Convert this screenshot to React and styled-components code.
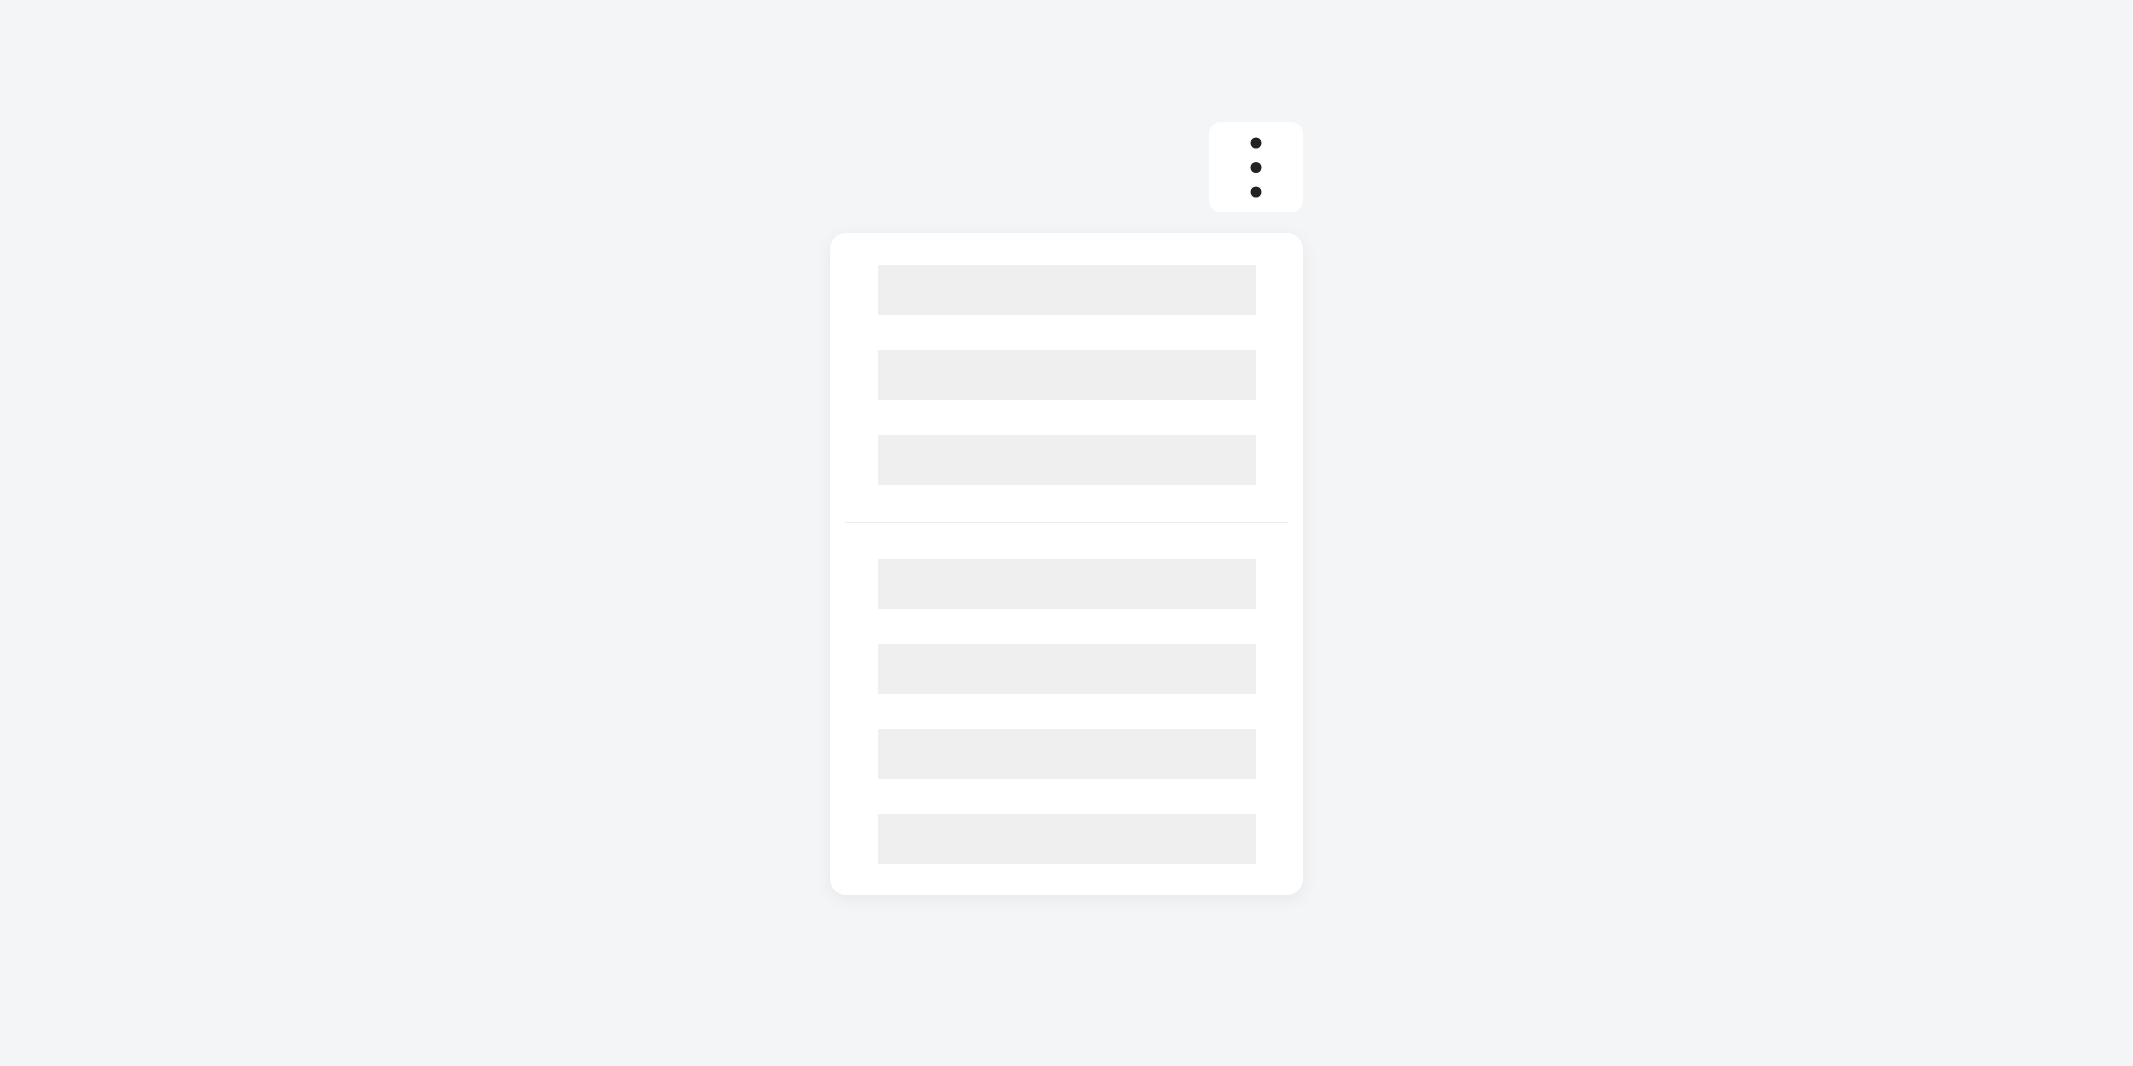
import React from 'react';
import styled, { createGlobalStyle } from 'styled-components';

const GlobalStyle = createGlobalStyle`
    html, body {
        margin: 0;
        padding: 0;
        background-color: #f4f5f7;
        font-family: "Inter", "Liberation Sans", sans-serif;
    }
`

const Page = styled.div`
    min-height: 100vh;
    display: flex;
    justify-content: center;
    padding-top: 122px;
    box-sizing: border-box;
`

const MenuWrapper = styled.div`
    width: 473px;
    display: flex;
    flex-direction: column;
    align-items: flex-end;
    gap: 21px;
`

const TriggerButton = styled.button`
    width: 94px;
    height: 90px;
    border: none;
    border-radius: 12px;
    background-color: #fff;
    display: flex;
    align-items: center;
    justify-content: center;
    padding: 0;
    cursor: pointer;
`

const MenuPanel = styled.div`
    width: 100%;
    box-sizing: border-box;
    background-color: #fff;
    border-radius: 16px;
    padding: 15px 15px 13px;
    box-shadow: 0px 4px 18px rgba(0, 0, 0, 0.06);
    display: flex;
    flex-direction: column;
`

const MenuItem = styled.div`
    padding: 17px 32px 18px 33px;
`

const Skeleton = styled.div`
    height: 50px;
    background-color: #efefef;
`

const Divider = styled.div`
    height: 1px;
    margin: 19px 0;
    background-color: #ebebeb;
`

function DotsIcon() {
    return (
        <svg width="12" height="61" viewBox="0 0 12 61">
            <circle cx="6" cy="6" r="5.5" fill="#222" />
            <circle cx="6" cy="30.5" r="5.5" fill="#222" />
            <circle cx="6" cy="55" r="5.5" fill="#222" />
        </svg>
    )
}

const topGroup = [0, 1, 2];
const bottomGroup = [0, 1, 2, 3];

export default function App() {
    return (
        <>
            <GlobalStyle />
            <Page>
                <MenuWrapper>
                    <TriggerButton aria-label="More options">
                        <DotsIcon />
                    </TriggerButton>
                    <MenuPanel>
                        {topGroup.map(i => (
                            <MenuItem key={`top-${i}`}><Skeleton /></MenuItem>
                        ))}
                        <Divider />
                        {bottomGroup.map(i => (
                            <MenuItem key={`bottom-${i}`}><Skeleton /></MenuItem>
                        ))}
                    </MenuPanel>
                </MenuWrapper>
            </Page>
        </>
    )
}
